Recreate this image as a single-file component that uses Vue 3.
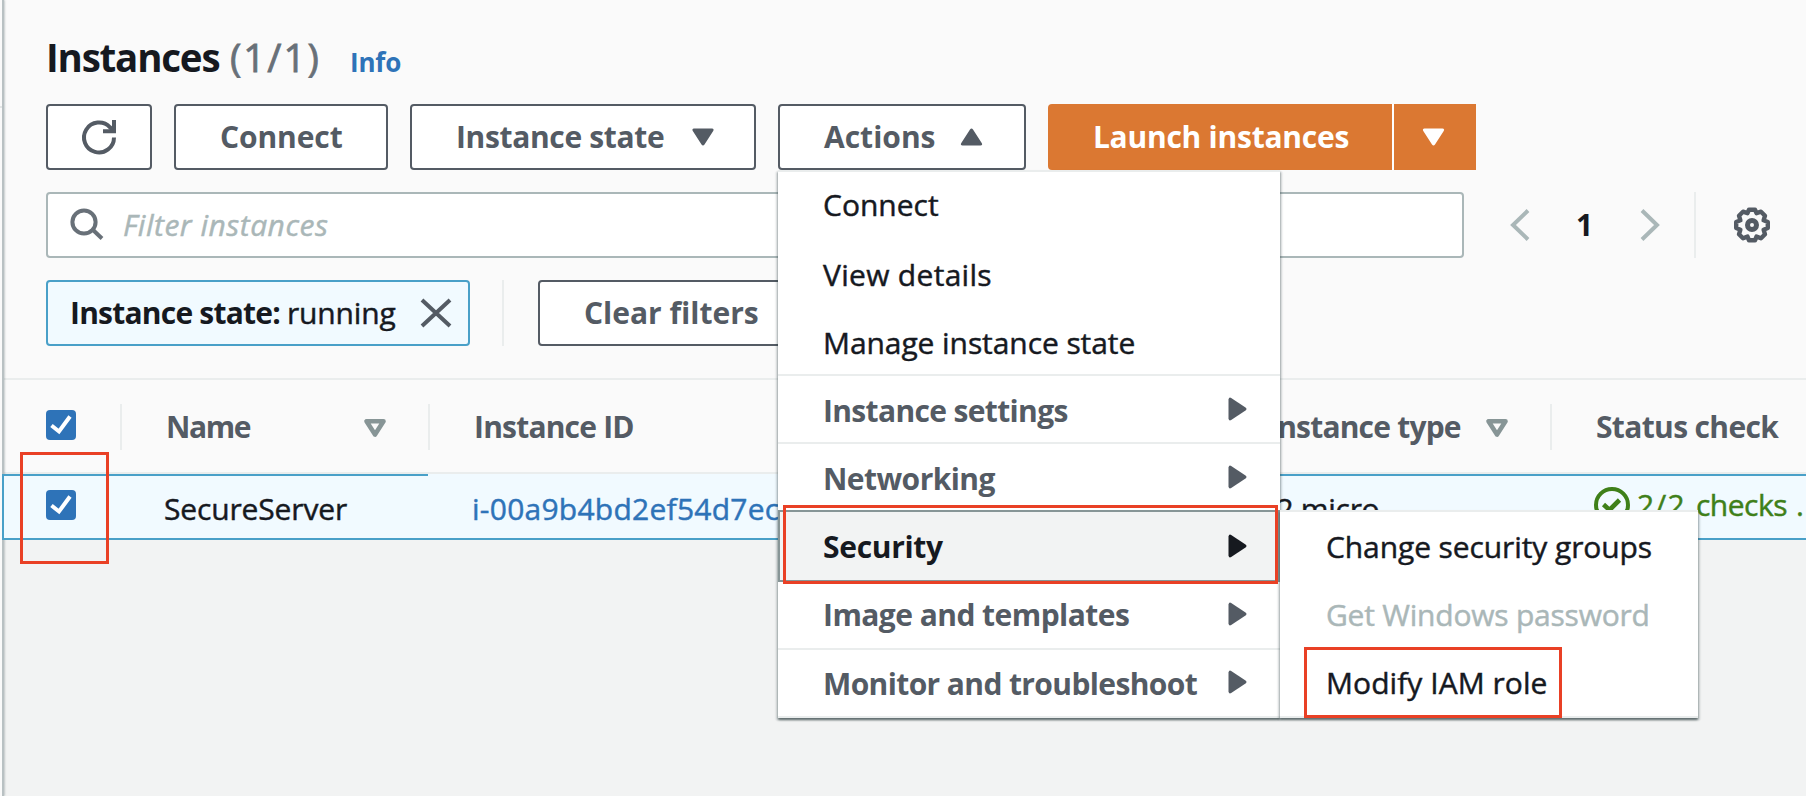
<script setup>
const actions = [
  { label: 'Connect', cls: 'first' },
  { label: 'View details', cls: 'view' },
  { label: 'Manage instance state', cls: 'manage' },
  { label: 'Instance settings', group: true, cls: 'line settings' },
  { label: 'Networking', group: true, cls: 'line' },
  { label: 'Security', group: true, cls: 'active' },
  { label: 'Image and templates', group: true, cls: 'after' },
  { label: 'Monitor and troubleshoot', group: true, cls: 'line monitor' },
]
const security = [
  { label: 'Change security groups', cls: 'change' },
  { label: 'Get Windows password', cls: 'disabled' },
  { label: 'Modify IAM role', cls: 'modify' },
]
</script>

<template>
  <div class="page">
    <div class="gutter"><i></i></div>
    <main class="main">
      <section class="header">
        <h1 class="title">
          <span class="title-name">Instances</span>
          <span class="count">(1/1)</span>
          <a class="info">Info</a>
        </h1>

        <div class="buttons">
          <button class="btn refresh">
            <svg width="36" height="36" viewBox="0 0 36 36" fill="none" stroke="#545b64" stroke-width="4">
              <path d="M33 18.500A15 15 0 1 1 29 8.300L33 12" />
              <path d="M33 1V12.200H22" />
            </svg>
          </button>
          <button class="btn connect">Connect</button>
          <button class="btn state">
            <span>Instance state</span>
            <svg width="22" height="18" viewBox="0 0 22 18"><path d="M2 .5H20Q22.500 1 21.200 3L12.500 16.500Q11 18.500 9.500 16.500L.8 3Q-.5 1 2 .5Z" fill="#545b64" /></svg>
          </button>
          <button class="btn act">
            <span>Actions</span>
            <svg width="23" height="18" viewBox="0 0 22 18"><path d="M2 17.500H20Q22.500 17 21.200 15L12.500 1.500Q11 -.5 9.500 1.500L.8 15Q-.5 17 2 17.500Z" fill="#545b64" /></svg>
          </button>
          <div class="launch">
            <button class="launch-main">Launch instances</button>
            <button class="launch-more">
              <svg width="23" height="18" viewBox="0 0 22 18"><path d="M2 .5H20Q22.500 1 21.200 3L12.500 16.500Q11 18.500 9.500 16.500L.8 3Q-.5 1 2 .5Z" fill="#fff" /></svg>
            </button>
          </div>
        </div>

        <div class="search-row">
          <div class="search">
            <svg width="34" height="32" viewBox="0 0 34 32" fill="none" stroke="#687078" stroke-width="4">
              <circle cx="14" cy="13" r="11.600" /><path d="M22.500 20.500L32 29.500" />
            </svg>
            <span>Filter instances</span>
          </div>
          <svg class="prev" width="20" height="34" viewBox="0 0 20 34" fill="none" stroke="#aab7b8" stroke-width="4"><path d="M18 2.500L3 17L18 31.500" /></svg>
          <span class="page-no">1</span>
          <svg class="next" width="20" height="34" viewBox="0 0 20 34" fill="none" stroke="#aab7b8" stroke-width="4"><path d="M2 2.500L17 17L2 31.500" /></svg>
          <i class="bar"></i>
          <svg class="gear" width="36" height="36" viewBox="-18 -18 36 36" fill="none" stroke="#545b64" stroke-width="4.400" stroke-linejoin="round">
            <path d="M-3 -15.300H3L4.500 -11.800L9 -13.300L13 -9.300L11.600 -4.700L15.800 -3V3L11.600 4.700L13 9.300L9 13.300L4.500 11.600L3 15.300H-3L-4.500 11.600L-9 13.300L-13 9.300L-11.600 4.700L-15.800 3V-3L-11.600 -4.700L-13 -9.300L-9 -13.300L-4.500 -11.800Z" />
            <circle r="4.500" stroke-width="5" />
          </svg>
        </div>

        <div class="filters">
          <div class="token">
            <b>Instance state:</b><span>running</span>
            <svg width="32" height="30" viewBox="0 0 32 30" stroke="#545b64" stroke-width="4"><path d="M2 2L30 28M30 2L2 28" /></svg>
          </div>
          <i class="bar token-bar"></i>
          <button class="btn clear">Clear filters</button>
        </div>
      </section>

      <section class="table">
        <div class="row head">
          <div class="cell pick"><svg class="check" width="30" height="30" viewBox="0 0 30 30"><rect width="30" height="30" rx="4" fill="#2e73b8" /><path d="M5.500 15.500L13 21.500L24 6.500" fill="none" stroke="#fff" stroke-width="4" /></svg></div>
          <div class="cell"><span class="h-name">Name</span><svg class="sort" width="22" height="18" viewBox="0 0 22 18"><path d="M2.500 2.200H19.500L11 15.500Z" fill="none" stroke="#879596" stroke-width="4.600" stroke-linejoin="round" /></svg></div>
          <div class="cell">Instance ID</div>
          <div class="cell type"><span>Instance type</span><svg class="sort" width="22" height="18" viewBox="0 0 22 18"><path d="M2.500 2.200H19.500L11 15.500Z" fill="none" stroke="#879596" stroke-width="4.600" stroke-linejoin="round" /></svg></div>
          <div class="cell last">Status check</div>
        </div>
        <div class="row data">
          <div class="cell pick topline"><svg class="check" width="30" height="30" viewBox="0 0 30 30"><rect width="30" height="30" rx="4" fill="#2e73b8" /><path d="M5.500 15.500L13 21.500L24 6.500" fill="none" stroke="#fff" stroke-width="4" /></svg></div>
          <div class="cell topline name">SecureServer</div>
          <div class="cell link">i-00a9b4bd2ef54d7ec</div>
          <div class="cell topline size">t2.micro</div>
          <div class="cell topline status">
            <svg width="36" height="36" viewBox="0 0 36 36" fill="none" stroke="#3f8019" stroke-width="4"><circle cx="18" cy="18" r="16" /><path d="M9.500 17.500L15.500 23L25.500 13" stroke-width="4.600" /></svg>
            <span class="frac">2/2</span><span>checks</span><span class="dots">.</span>
          </div>
        </div>
      </section>
    </main>

    <nav class="menu">
      <div v-for="a in actions" :key="a.label" class="item" :class="[a.cls, { group: a.group }]">
        <span>{{ a.label }}</span>
        <svg v-if="a.group" width="19" height="24" viewBox="0 0 19 24"><path d="M.5 2.500Q1 -.3 3.200 1L17.500 10.500Q19.500 12 17.500 13.500L3.200 23Q1 24.300 .5 21.500Z" fill="currentColor" /></svg>
      </div>
    </nav>
    <nav class="menu submenu">
      <div v-for="s in security" :key="s.label" class="item" :class="s.cls"><span>{{ s.label }}</span></div>
    </nav>

    <div class="mark mark-check"></div>
    <div class="mark mark-security"></div>
    <div class="mark mark-modify"></div>
  </div>
</template>

<style>
body { overflow: hidden; }
</style>
<style scoped>
* { box-sizing: border-box; }
.page { position: relative; display: flex; width: 1806px; height: 796px; overflow: hidden; background: #f2f3f3; color: #16191f; font: 400 30px/40px "Open Sans", "Noto Sans", sans-serif; white-space: nowrap; -webkit-text-stroke: .45px; }
svg { display: block; flex: none; overflow: visible; }
button, .head, .title-name, .info, .page-no, .token b, .group { -webkit-text-stroke: 0; }
.gutter { width: 4px; flex: none; background: #fafafa; border-right: 2px solid #b9c1c3; box-shadow: 1px 0 2px rgba(0, 28, 36, .2); position: relative; z-index: 1; }
.gutter i { display: block; width: 2px; height: 2px; margin-top: 106px; background: #e3e6e6; }
.main { width: 1802px; flex: none; }
.header { height: 380px; padding: 32px 0 0 42px; background: #fafafa; border-bottom: 2px solid #eaeded; }
.title { display: flex; align-items: baseline; height: 72px; margin: 0; font-size: 38.500px; line-height: 51px; font-weight: 700; }
.title-name { width: 184px; letter-spacing: -1.200px; }
.count { width: 120px; font-weight: 400; letter-spacing: 2px; color: #687078; -webkit-text-stroke: .8px; }
.info { font-size: 26px; letter-spacing: -.2px; color: #2e73b8; }
.buttons { display: flex; height: 66px; }
.btn { display: flex; align-items: center; height: 66px; border: 2px solid #545b64; border-radius: 4px; background: #fff; color: #545b64; font: inherit; font-weight: 700; padding: 0 0 0 44px; white-space: nowrap; text-align: left; }
.refresh { width: 106px; padding-left: 33px; margin-right: 22px; }
.connect { width: 214px; margin-right: 22px; letter-spacing: -.1px; }
.state { width: 346px; margin-right: 22px; }
.state span { width: 236px; letter-spacing: -.35px; }
.act { width: 248px; margin-right: 22px; }
.act span { width: 136px; }
.launch { display: flex; }
.launch button { height: 66px; border: 0; padding: 0; background: #db7832; color: #fff; font: inherit; font-weight: 700; }
.launch .launch-main { width: 344px; padding-left: 2px; border-radius: 4px 0 0 4px; letter-spacing: -.25px; }
.launch .launch-more { width: 84px; padding-left: 28px; border-left: 2px solid #fff; }
.search-row { display: flex; align-items: center; height: 66px; margin-top: 22px; }
.search { display: flex; align-items: center; width: 1418px; height: 66px; padding-left: 22px; border: 2px solid #aab7b8; border-radius: 4px; background: #fff; color: #aab7b8; font-style: italic; letter-spacing: .5px; }
.search span { margin-left: 19px; }
.prev { margin-left: 46px; }
.page-no { width: 18px; margin: 0 46px; font-weight: 700; }
.bar { width: 2px; height: 66px; margin-left: 34px; background: #eaeded; }
.gear { margin-left: 38px; }
.filters { display: flex; margin-top: 22px; }
.token { display: flex; align-items: center; width: 424px; height: 66px; padding-left: 22px; border: 2px solid #49a0c8; border-radius: 4px; background: #f1faff; }
.token b { width: 217px; letter-spacing: -.78px; }
.token span { width: 133px; letter-spacing: -.15px; }
.token-bar { margin-left: 32px; }
.clear { width: 268px; margin-left: 34px; }
.row { display: grid; grid-template-columns: 118px 308px 797px 325px 1fr; }
.cell { position: relative; display: flex; align-items: center; padding-left: 44px; }
.pick { padding-left: 42px; }
.head { height: 94px; background: #fafafa; border-bottom: 2px solid #eaeded; color: #545b64; font-weight: 700; letter-spacing: -.8px; }
.head .cell { height: 46px; margin-top: 24px; border-right: 2px solid #eaeded; }
.head .cell:nth-child(3), .head .last { border-right: 0; }
.head .last { letter-spacing: -.65px; }
.head .check { margin-top: -4px; }
.h-name { width: 198px; letter-spacing: -1.400px; }
.type { padding-left: 41px; }
.type span { width: 218px; }
.head .sort { margin-top: 2px; }
.data { height: 66px; background: #f1faff; border-bottom: 2px solid #49a0c8; border-left: 2px solid #49a0c8; grid-template-columns: 116px 308px 797px 325px 1fr; margin-left: -2px; width: 1804px; position: relative; z-index: 2; }
.data .cell { border-top: 2px solid transparent; padding-top: 3px; }
.data .topline { border-top-color: #49a0c8; }
.data .pick { padding: 0 0 4px 42px; }
.data .name, .data .link { padding-left: 44px; letter-spacing: -.15px; }
.data .link { color: #2e73b8; letter-spacing: .25px; }
.data .size { padding-left: 41px; letter-spacing: -.3px; }
.data .status { color: #3f8019; padding: 0 0 5px 44px; }
.status span { letter-spacing: -.5px; }
.status .frac { width: 59px; margin-left: 7px; letter-spacing: 1.200px; }
.status .dots { margin-left: 9px; }
.menu { position: absolute; z-index: 3; left: 778px; top: 170px; width: 502px; height: 548px; background: #fff; border-top: 2px solid #eaeded; border-bottom: 2px solid #eaeded; box-shadow: 0 2px 2px rgba(70, 84, 86, .75), 2px 2px 2px rgba(0, 28, 36, .14), -2px 2px 2px rgba(0, 28, 36, .14); }
.item { display: flex; align-items: center; justify-content: space-between; height: 68px; padding: 3px 33px 0 45px; }
.item.first { height: 66px; padding-top: 0; letter-spacing: 0; }
.item.view { padding-top: 5px; letter-spacing: .3px; }
.item.manage { padding-top: 5px; letter-spacing: -.08px; }
.item.group { color: #545b64; font-weight: 700; letter-spacing: -.55px; }
.item.line { border-top: 2px solid #eaeded; }
.item svg { margin-top: -3px; }
.item.active { height: 72px; padding: 2px 31px 0 43px; background: #f2f3f3; border: 2px solid #879596; color: #16191f; letter-spacing: -.3px; }
.item.active svg { margin-top: -2px; }
.item.after { height: 66px; padding-top: 0; }
.item.after svg { margin-top: -2px; }
.item.monitor { padding-top: 1px; letter-spacing: -.62px; }
.item.monitor svg { margin-top: -3px; }
.item.settings { letter-spacing: -.65px; }
.submenu { left: 1280px; top: 510px; width: 418px; height: 208px; }
.submenu .item { letter-spacing: -.1px; padding-left: 46px; }
.submenu .change { height: 70px; padding-top: 0; }
.submenu .disabled { color: #aab7b8; height: 66px; padding-top: 0; letter-spacing: -.22px; }
.submenu .modify { padding-top: 1px; letter-spacing: .05px; }
.mark { position: absolute; z-index: 4; border: 3px solid #e94025; }
.mark-check { left: 20px; top: 452px; width: 89px; height: 112px; }
.mark-security { left: 783px; top: 505px; width: 495px; height: 79px; }
.mark-modify { left: 1304px; top: 647px; width: 258px; height: 71px; }
</style>
